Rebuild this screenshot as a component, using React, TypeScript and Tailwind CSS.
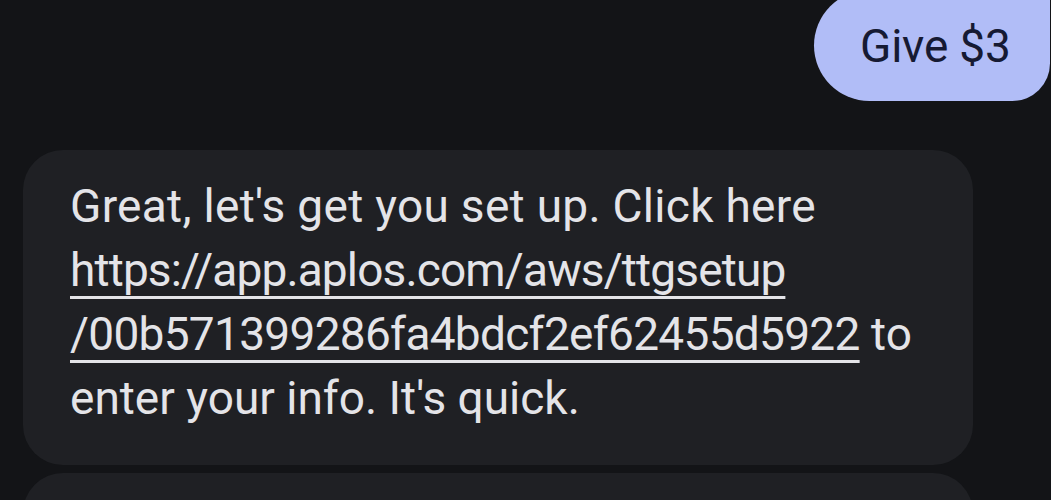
import React from "react";

export default function App() {
  return (
    <div
      className="h-[500px] w-[1051px] overflow-hidden bg-[#131417]"
      style={{ fontFamily: "Roboto, 'Noto Sans', sans-serif" }}
    >
      <div className="flex justify-end pr-[1px]">
        <div className="mt-[-10px] flex h-[111px] w-[236px] items-center rounded-l-[56px] rounded-br-[38px] bg-[#b1bdf7] pl-[46px] text-[46px] leading-none tracking-[-0.2px] text-[#161a33]">
          Give $3
        </div>
      </div>
      <div className="mt-[49px] ml-[23px] w-[950px] rounded-[40px] bg-[#1f2024] pt-[24px] pb-[35px] pl-[47px] text-[46px] leading-[64px] text-[#e4e4e8]">
        <span className="tracking-[0.3px]">Great, let's get you set up. Click here</span>
        <br />
        <span className="underline decoration-[3px] underline-offset-[10px] [text-decoration-skip-ink:none]">
          <span className="tracking-[-0.85px]">https://app.aplos.com/aws/ttgsetup</span>
          <br />
          <span className="tracking-[-0.7px]">/00b571399286fa4bdcf2ef62455d5922</span>
        </span>{" "}
        to
        <br />
        enter your info. It's quick.
      </div>
      <div className="mt-[8px] ml-[23px] h-[100px] w-[950px] rounded-[40px] bg-[#1f2024]" />
    </div>
  );
}
